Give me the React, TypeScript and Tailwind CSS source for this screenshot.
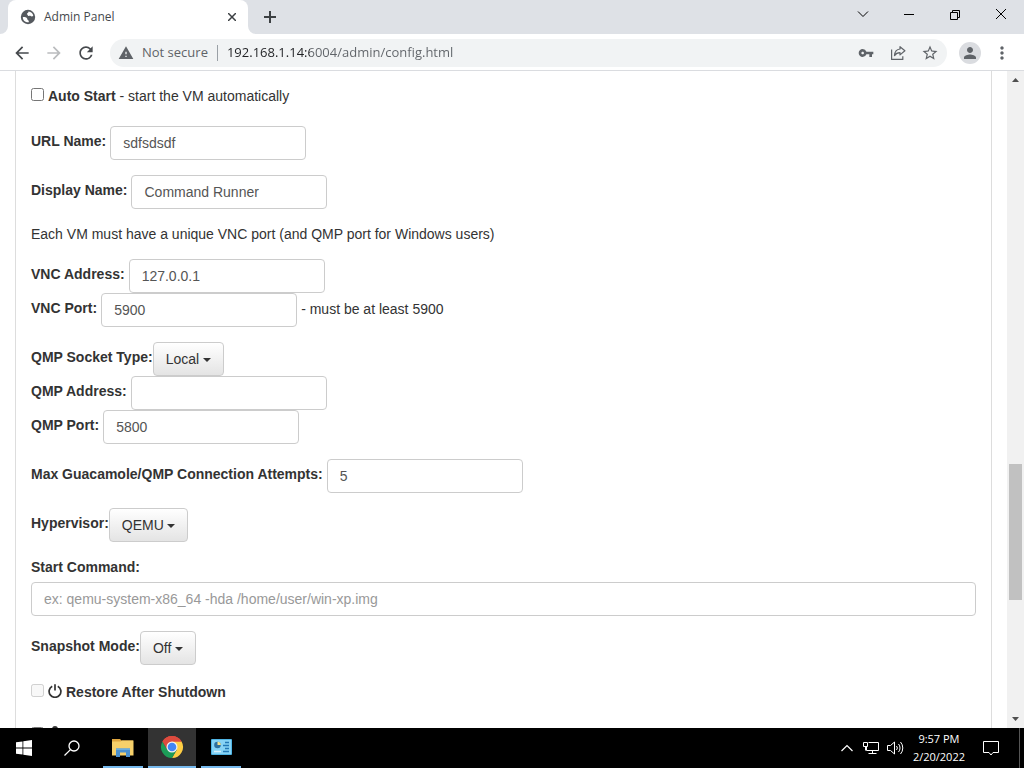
import type { ReactNode } from "react";
import {
  MdArrowBack,
  MdArrowForward,
  MdMoreVert,
  MdPerson,
  MdRefresh,
  MdStarBorder,
  MdVpnKey,
  MdWarning,
} from "react-icons/md";

const inputClass =
  "h-[34px] rounded border border-[#ccc] bg-white px-3 text-sm text-[#555] placeholder:text-[#999] outline-none focus:border-[#66afe9]";

function Group({ children }: { children: ReactNode }) {
  return <div className="mb-[15px]">{children}</div>;
}

function TextField({
  id,
  label,
  value,
  note,
}: {
  id: string;
  label: string;
  value: string;
  note?: string;
}) {
  return (
    <div className="flex items-center gap-1">
      <label htmlFor={id} className="mb-1 font-bold">
        {label}
      </label>
      <input id={id} type="text" defaultValue={value} className={`${inputClass} w-[196px]`} />
      {note && <span className="mb-0.5">{note}</span>}
    </div>
  );
}

function SelectField({ id, label, value }: { id: string; label: string; value: string }) {
  return (
    <div className="flex items-center">
      <label htmlFor={id} className="mb-1 font-bold">
        {label}
      </label>
      <div className="relative">
        <select
          id={id}
          className="block h-[34px] appearance-none rounded border border-[#ccc] bg-linear-to-b from-white to-[#e4e4e4] pr-[23px] pl-3 text-sm text-[#333] outline-none"
        >
          <option>{value}</option>
        </select>
        <svg
          viewBox="0 0 8 4"
          className="pointer-events-none absolute top-4 right-[13px] h-1 w-2 fill-[#333]"
        >
          <path d="M0 0h8L4 4z" />
        </svg>
      </div>
    </div>
  );
}

function GlobeIcon() {
  return (
    <svg viewBox="0 0 16 16" className="size-4 shrink-0">
      <circle cx="8" cy="8" r="7.200" fill="#55595e" />
      <path
        d="M2.800 8.200c1.600-.3 3.200.2 4 .9.700.6.300 1.300 1 1.900.6.500 1.200.8 1 2.300-3.300.3-6-2-6-5.100zM8.600 2.600c2.300.2 4.200 1.900 4.700 4.100-.8.900-2 .9-2.600.3-.6-.5-1.500.1-2.300-.1-.9-.3-.6-1.300-1.500-1.600.1-1.300 1.500-1 1.700-2.700z"
        fill="#fff"
      />
    </svg>
  );
}

function ShareIcon() {
  return (
    <svg
      viewBox="0 0 16 16"
      className="size-4"
      fill="none"
      stroke="#5f6368"
      strokeWidth="1.200"
      strokeLinejoin="round"
    >
      <path d="M1.600 4.500v9.900h11.200v-3.200" />
      <path d="M10 1.700l4.900 4.100L10 9.900V7.600c-2.600 0-4.200.9-5.500 3 .2-3.600 2-6.200 5.500-6.600z" />
    </svg>
  );
}

function TabStrip() {
  return (
    <div className="flex h-[34px] shrink-0 bg-[#dee1e6] pl-2">
      <div className="relative flex w-60 items-center rounded-t-lg bg-white pr-2.5 pl-3">
        <svg viewBox="0 0 8 8" className="absolute bottom-0 -left-2 size-2 fill-white">
          <path d="M8 0v8H0a8 8 0 0 0 8-8z" />
        </svg>
        <svg viewBox="0 0 8 8" className="absolute -right-2 bottom-0 size-2 fill-white">
          <path d="M0 0v8h8a8 8 0 0 1-8-8z" />
        </svg>
        <GlobeIcon />
        <span className="ml-2 flex-1 text-xs text-[#45494d]">Admin Panel</span>
        <button type="button" aria-label="Close tab" className="p-0.5">
          <svg viewBox="0 0 8 8" className="size-2 stroke-[#3c4043] stroke-[1.500]">
            <path d="M0 0l8 8M8 0L0 8" />
          </svg>
        </button>
      </div>
      <button type="button" aria-label="New tab" className="ml-4 self-center">
        <svg viewBox="0 0 12 12" className="size-3 stroke-[#3c4043] stroke-2">
          <path d="M6 0v12M0 6h12" />
        </svg>
      </button>
      <div className="ml-auto flex h-7 text-black">
        {[
          { name: "Search tabs", d: "M1 3.500l5 5 5-5" },
          { name: "Minimize", d: "M1 6.500h10" },
          { name: "Restore", d: "M1.500 4.500h7v7h-7zM3.500 4.500v-2h7v7h-2" },
          { name: "Close", d: "M1 1l10 10M11 1L1 11" },
        ].map((b) => (
          <button
            key={b.name}
            type="button"
            aria-label={b.name}
            className="flex w-[46px] items-center justify-center"
          >
            <svg viewBox="0 0 12 12" className="size-3 fill-none stroke-current">
              <path d={b.d} />
            </svg>
          </button>
        ))}
      </div>
    </div>
  );
}

function Toolbar() {
  return (
    <div className="flex h-[37px] shrink-0 items-center border-b border-[#dadce0] bg-white px-3 pt-px text-[#5f6368]">
      <button type="button" aria-label="Back" className="text-[#46494d]">
        <MdArrowBack size={20} />
      </button>
      <button type="button" aria-label="Forward" className="ml-3 text-[#babcbe]">
        <MdArrowForward size={20} />
      </button>
      <button type="button" aria-label="Reload" className="ml-3 text-[#46494d]">
        <MdRefresh size={20} />
      </button>
      <div className="ml-3.5 flex h-7 min-w-0 flex-1 items-center rounded-full bg-[#f1f3f4] px-2">
        <MdWarning size={16} />
        <span className="ml-2 text-[13px] whitespace-nowrap">Not secure</span>
        <span className="mx-[9px] h-4 w-px bg-[#9aa0a6]" />
        <input
          type="text"
          aria-label="Address"
          defaultValue="192.168.1.14:6004/admin/config.html"
          className="min-w-0 flex-1 bg-[linear-gradient(to_right,#202124_83px,#5f6368_83px)] bg-clip-text text-[13px] text-[#5f6368] outline-none [-webkit-text-fill-color:transparent]"
        />
        <button type="button" aria-label="Passwords">
          <MdVpnKey size={16} />
        </button>
        <button type="button" aria-label="Share" className="ml-4">
          <ShareIcon />
        </button>
        <button type="button" aria-label="Bookmark" className="ml-[15px]">
          <MdStarBorder size={18} />
        </button>
      </div>
      <button
        type="button"
        aria-label="Profile"
        className="ml-3 flex size-[22px] items-center justify-center rounded-full bg-[#dadce0]"
      >
        <MdPerson size={18} />
      </button>
      <button type="button" aria-label="Menu" className="ml-[11px]">
        <MdMoreVert size={20} />
      </button>
    </div>
  );
}

function ConfigForm() {
  return (
    <form className="mx-[15px] min-w-0 flex-1 border-x border-[#ddd] px-[15px] pt-[15px] text-sm leading-5 text-[#333]">
      <div className="mb-5 flex items-center gap-1">
        <input id="autostart" type="checkbox" className="mb-1 size-[13px]" />
        <label htmlFor="autostart">
          <b>Auto Start</b> - start the VM automatically
        </label>
      </div>
      <Group>
        <TextField id="url-name" label="URL Name:" value="sdfsdsdf" />
      </Group>
      <Group>
        <TextField id="display-name" label="Display Name:" value="Command Runner" />
      </Group>
      <p className="mb-[15px]">
        Each VM must have a unique VNC port (and QMP port for Windows users)
      </p>
      <Group>
        <TextField id="vnc-address" label="VNC Address:" value="127.0.0.1" />
        <TextField
          id="vnc-port"
          label="VNC Port:"
          value="5900"
          note="- must be at least 5900"
        />
      </Group>
      <Group>
        <SelectField id="qmp-type" label="QMP Socket Type:" value="Local" />
        <TextField id="qmp-address" label="QMP Address:" value="" />
        <TextField id="qmp-port" label="QMP Port:" value="5800" />
      </Group>
      <Group>
        <TextField
          id="attempts"
          label="Max Guacamole/QMP Connection Attempts:"
          value="5"
        />
      </Group>
      <Group>
        <SelectField id="hypervisor" label="Hypervisor:" value="QEMU" />
      </Group>
      <Group>
        <label htmlFor="command" className="mb-[5px] block font-bold">
          Start Command:
        </label>
        <input
          id="command"
          type="text"
          placeholder="ex: qemu-system-x86_64 -hda /home/user/win-xp.img"
          className={`${inputClass} block w-full`}
        />
      </Group>
      <Group>
        <SelectField id="snapshot" label="Snapshot Mode:" value="Off" />
      </Group>
      <div className="mt-[17px] flex items-center gap-1">
        <input id="restore" type="checkbox" disabled className="mb-[3px] size-[13px]" />
        <label htmlFor="restore" className="flex items-center gap-1 font-bold">
          <svg
            viewBox="0 0 14 14"
            className="mb-0.5 size-3.5 fill-none stroke-[#333] stroke-[1.700]"
          >
            <path d="M4.200 2.200a5.900 5.900 0 1 0 5.600 0M7 .2v6.300" />
          </svg>
          Restore After Shutdown
        </label>
      </div>
      <div className="mt-6 flex items-center gap-1">
        <input
          id="restore-periodic"
          type="checkbox"
          aria-label="Restore periodically"
          className="size-[13px]"
        />
        <svg viewBox="0 0 14 14" className="size-3.5 fill-[#333]">
          <circle cx="7" cy="3" r="3" />
          <path d="M1 14a6 6 0 0 1 12 0z" />
        </svg>
      </div>
    </form>
  );
}

function ScrollBar() {
  return (
    <div className="flex w-[17px] shrink-0 flex-col items-center bg-[#f1f1f1] py-[7px]">
      <svg viewBox="0 0 7 4" className="h-1 w-[7px] shrink-0 fill-[#505050]">
        <path d="M0 4h7L3.500 0z" />
      </svg>
      <div className="flex w-full flex-1 flex-col items-center">
        <div className="flex-[382]" />
        <div className="w-[13px] flex-[136] bg-[#c1c1c1]" />
        <div className="flex-[117]" />
      </div>
      <svg viewBox="0 0 7 4" className="h-1 w-[7px] shrink-0 fill-[#505050]">
        <path d="M0 0h7L3.500 4z" />
      </svg>
    </div>
  );
}

function WindowsIcon() {
  return (
    <svg viewBox="0 0 16 16" className="size-4 fill-white">
      <path d="M0 2.300l6.500-.9v6.200H0zM7.300 1.300L16 0v7.600H7.300zM0 8.400h6.500v6.200L0 13.700zM7.300 8.400H16V16l-8.700-1.300z" />
    </svg>
  );
}

function SearchIcon() {
  return (
    <svg viewBox="0 0 16 16" className="size-4 fill-none stroke-white stroke-[1.300]">
      <circle cx="10" cy="6" r="5" />
      <path d="M6.500 9.600L.5 15.500" />
    </svg>
  );
}

function FolderIcon() {
  return (
    <svg viewBox="0 0 22 20" className="h-5 w-[22px]">
      <path d="M0 2h8l1.500 1.500H21v4H0z" fill="#dfa63f" />
      <path d="M0 4.500h8.500L10 3.500h11.500V18.500H0z" fill="#f6d06a" />
      <path d="M4 20v-8.500h14V20h-4v-4.500H8V20z" fill="#4a90cf" />
      <path d="M4 11.500h14V13H4z" fill="#6aaee0" />
    </svg>
  );
}

function ChromeIcon() {
  return (
    <svg viewBox="0 0 24 24" className="size-6">
      <path d="M12 12L2.470 6.500A11 11 0 0 1 21.530 6.500z" fill="#dd4b3e" />
      <path d="M12 6.500h9.530A11 11 0 0 1 12 23L16.760 14.750z" fill="#ffce44" />
      <path d="M12 12l4.760 2.750L12 23A11 11 0 0 1 2.470 6.500L7.240 14.750z" fill="#1c9c57" />
      <path d="M12 6.500h9.530A11 11 0 0 0 2.470 6.500l4.770 8.250z" fill="#dd4b3e" />
      <circle cx="12" cy="12" r="5.500" fill="#f1f1f1" />
      <circle cx="12" cy="12" r="4.300" fill="#4285f4" />
    </svg>
  );
}

function ControlPanelIcon() {
  return (
    <svg viewBox="0 0 21 16" className="h-4 w-[21px]">
      <rect width="21" height="16" rx="1" fill="#4fb4e4" />
      <rect x="1" y="1" width="19" height="14" fill="#86d3f5" />
      <circle cx="6.500" cy="6" r="3.300" fill="#2d6f9e" />
      <path d="M6.500 6V2.700A3.300 3.300 0 0 1 9.800 6z" fill="#f4e08b" />
      <path d="M14 3.500h4M12 6.500h6M14 9.500h4M12 12.500h6" stroke="#2378b5" strokeWidth="1.300" />
      <path d="M3 12.500h7" stroke="#d8f1fc" strokeWidth="1.500" />
    </svg>
  );
}

function Taskbar() {
  return (
    <footer className="flex h-10 shrink-0 items-stretch bg-black text-white">
      <button type="button" aria-label="Start" className="flex w-12 items-center justify-center">
        <WindowsIcon />
      </button>
      <button type="button" aria-label="Search" className="flex w-12 items-center justify-center">
        <SearchIcon />
      </button>
      <button
        type="button"
        aria-label="File Explorer"
        className="ml-[7px] flex w-10 items-center justify-center border-b-2 border-[#76b9ed]"
      >
        <FolderIcon />
      </button>
      <button
        type="button"
        aria-label="Chrome"
        className="ml-[5px] flex w-12 items-center justify-center border-b-2 border-[#76b9ed] bg-[#333]"
      >
        <ChromeIcon />
      </button>
      <button
        type="button"
        aria-label="Control Panel"
        className="ml-[5px] flex w-10 items-center justify-center border-b-2 border-[#76b9ed]"
      >
        <ControlPanelIcon />
      </button>
      <div className="ml-auto flex items-center">
        <svg viewBox="0 0 12 8" className="h-2 w-3 fill-none stroke-white stroke-[1.200]">
          <path d="M0.500 7L6 1.500 11.500 7" />
        </svg>
        <svg viewBox="0 0 16 14" className="ml-2.5 h-3.5 w-4 fill-none stroke-white">
          <path d="M5.500 1.500h10v8h-12V6M9.500 9.500v3M5.500 12.500h8M.5 1.500h4v4h-4zM2.500 5.500v4" />
        </svg>
        <svg viewBox="0 0 17 14" className="ml-2 h-3.5 w-[17px] fill-none stroke-white">
          <path d="M.5 4.500h3l4-3.500v12l-4-3.500h-3zM9.500 5a3 3 0 0 1 0 4M11.500 3a6 6 0 0 1 0 8M13.500 1a9 9 0 0 1 0 12" />
        </svg>
        <div className="ml-[9px] text-center text-[11px] leading-[18px]">
          <div>9:57 PM</div>
          <div>2/20/2022</div>
        </div>
        <svg viewBox="0 0 16 16" className="ml-[18px] size-4 fill-none stroke-white">
          <path d="M.5 1.500h15v11H10l-2 2.500-2-2.500H.5z" />
        </svg>
        <div className="ml-5 h-10 w-[5px] border-l border-[#555]" />
      </div>
    </footer>
  );
}

export default function App() {
  return (
    <div className="flex h-screen flex-col overflow-hidden bg-white font-['Open_Sans','Noto_Sans',sans-serif]">
      <TabStrip />
      <Toolbar />
      <main className="flex min-h-0 flex-1 overflow-hidden font-['Liberation_Sans',Arial,sans-serif]">
        <ConfigForm />
        <ScrollBar />
      </main>
      <Taskbar />
    </div>
  );
}
